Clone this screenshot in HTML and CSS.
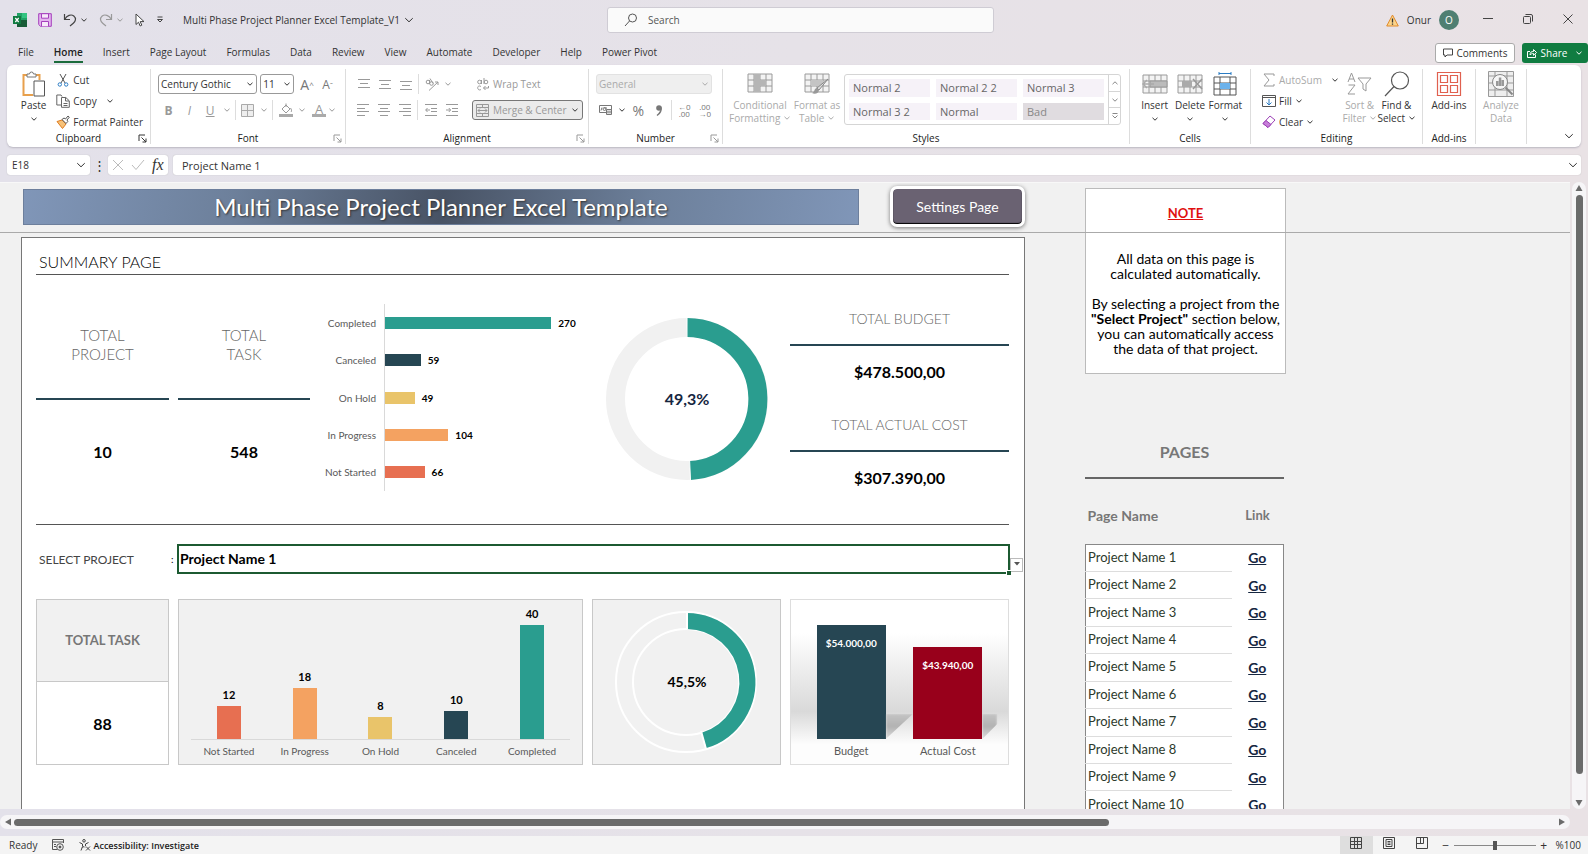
FILE: index.html
```html
<!DOCTYPE html>
<html lang="en">
<head>
    <meta charset="UTF-8">
    <meta name="viewport" content="width=device-width, initial-scale=1.0">
    <title>Multi Phase Project Planner Excel Template_V1</title>
    <link rel="stylesheet" href="styles.css">
</head>
<body>
    <!-- shared icons -->
    <svg class="defs" width="0" height="0" aria-hidden="true">
        <symbol id="chev" viewBox="0 0 8 8"><path d="M1.5 2.8 4 5.2 6.5 2.8" fill="none" stroke="currentColor" vector-effect="non-scaling-stroke"/></symbol>
        <symbol id="launch" viewBox="0 0 9 9"><path d="M1 7V1h6M3.5 3.5 8 8M8 4.5V8H4.500" fill="none" stroke="currentColor"/></symbol>
        <symbol id="table" viewBox="0 0 26 20"><path d="M1 1h24v18H1zM1 7h24M1 13h24M7 1v18M13 1v18M19 1v18" fill="#f3f3f3" stroke="#9a9a9a"/></symbol>
    </svg>

    <div class="app">
        <header class="titlebar">
            <div class="quick">
                <svg width="14" height="14" viewBox="0 0 14 14"><path d="M4 0h10v14H4z" fill="#21a366"/><path d="M9 0h5v5H9z" fill="#33c481"/><path d="M4 7h10v7H4z" fill="#185c37"/><path d="M0 3h8v8H0z" fill="#107c41"/><path d="m2.300 5 3.400 4M5.700 5 2.300 9" stroke="#fff" stroke-width="1.200"/></svg>
                <button class="tool" aria-label="Save"><svg width="14" height="14" viewBox="0 0 14 14" fill="#e3b4ee" stroke="#a53fbd"><path d="M.7.7h12.600v12.600H2.500L.7 11.500z"/><path d="M3.500.7h7v4.500h-7zM3.500 13.300V8.500h7v4.800" fill="#f6e9f9"/></svg></button>
                <button class="tool" aria-label="Undo"><svg width="14" height="14" viewBox="0 0 14 14" fill="none" stroke="#444" stroke-width="1.200"><path d="M1.500 1v5.500H7M1.800 6.200C4 2.500 8 .8 10.800 3c3 2.600 1.500 5.500-.5 7.200L7 13"/></svg><svg class="c" width="8" height="8"><use href="#chev"/></svg></button>
                <button class="tool faded" aria-label="Redo"><svg width="14" height="14" viewBox="0 0 14 14" fill="none" stroke="currentColor" stroke-width="1.200"><path d="M12.500 1v5.500H7M12.200 6.200C10 2.500 6 .8 3.200 3c-3 2.600-1.500 5.500.5 7.200L7 13"/></svg><svg class="c" width="8" height="8"><use href="#chev"/></svg></button>
                <button class="tool" aria-label="Select objects"><svg width="10" height="14" viewBox="0 0 10 14" fill="#fff" stroke="#444"><path d="M1 1v10.500l2.500-2.300 1.700 3.800 1.600-.8-1.600-3.600H9z"/></svg></button>
                <button class="tool" aria-label="Customize toolbar"><svg width="8" height="8" viewBox="0 0 8 8" fill="none" stroke="#444"><path d="M1.500 1h5M1.500 3.500 4 6l2.500-2.500z"/></svg></button>
            </div>
            <button class="doc-name">Multi Phase Project Planner Excel Template_V1 <svg width="12" height="12"><use href="#chev"/></svg></button>
            <label class="search">
                <svg width="14" height="14" viewBox="0 0 14 14" fill="none" stroke="#555"><circle cx="8.500" cy="5" r="4"/><path d="M5.500 8 1 13"/></svg>
                <input type="text" placeholder="Search" aria-label="Search">
            </label>
            <div class="account">
                <svg width="13" height="13" viewBox="0 0 13 13"><path d="M6.500 1 12.300 12H.7z" fill="#fbd48a" stroke="#e08a2c"/><path d="M6.500 4.500v4M6.500 9.500v1.300" stroke="#333" stroke-width="1.300"/></svg>
                <span>Onur</span>
                <span class="avatar">O</span>
            </div>
            <div class="window-buttons">
                <button aria-label="Minimize"><svg width="10" height="10" viewBox="0 0 10 10" stroke="#444"><path d="M0 4.500h10"/></svg></button>
                <button aria-label="Restore"><svg width="10" height="10" viewBox="0 0 10 10" fill="none" stroke="#444"><rect x=".5" y="2.500" width="7" height="7" rx="1"/><path d="M2.500.5h5.500a1.500 1.500 0 0 1 1.500 1.500v5.500"/></svg></button>
                <button aria-label="Close"><svg width="10" height="10" viewBox="0 0 10 10" stroke="#444"><path d="m.5.5 9 9M9.500.5l-9 9"/></svg></button>
            </div>
        </header>

        <nav class="tabs">
            <a href="#">File</a>
            <a href="#" class="active">Home</a>
            <a href="#">Insert</a>
            <a href="#">Page Layout</a>
            <a href="#">Formulas</a>
            <a href="#">Data</a>
            <a href="#">Review</a>
            <a href="#">View</a>
            <a href="#">Automate</a>
            <a href="#">Developer</a>
            <a href="#">Help</a>
            <a href="#">Power Pivot</a>
            <button class="comments"><svg width="10" height="10" viewBox="0 0 10 10" fill="none" stroke="#444"><path d="M.5 1h9v6H4L2 9V7H.5z"/></svg>Comments</button>
            <button class="share"><svg width="10" height="10" viewBox="0 0 10 10" fill="none" stroke="#fff"><path d="M3 3.500H.5v6h8V6.500M3 7c0-3 1.500-3.500 3.500-3.500V1.500l3 3-3 2.800V5.500C5 5.500 4 5.800 3 7z"/></svg>Share<svg class="c" width="8" height="8"><use href="#chev"/></svg></button>
        </nav>

        <div class="ribbon">
            <section class="group g-clip">
                <div class="body">
                    <button class="big"><svg width="24" height="26" viewBox="0 0 24 26" fill="none"><path d="M11 24H1.500V4H6M13 4h4.500v5" stroke="#e8a04c" stroke-width="2"/><path d="M5 6V3h2.500a2 2 0 0 1 4 0H14v3z" fill="#fff" stroke="#777"/><path d="M12 10h10.500v15H12z" fill="#fff" stroke="#555"/></svg>Paste<svg class="c" width="8" height="8"><use href="#chev"/></svg></button>
                    <div class="list">
                        <button><svg width="14" height="14" viewBox="0 0 14 14" fill="none"><path d="m4 1 5 9M10 1 5 10" stroke="#555"/><circle cx="3.800" cy="11.500" r="1.700" stroke="#2b7cc4"/><circle cx="10.200" cy="11.500" r="1.700" stroke="#2b7cc4"/></svg>Cut</button>
                        <button><svg width="14" height="14" viewBox="0 0 14 14" fill="#fff" stroke="#666"><path d="M5 11H.8V1H5l1 1.500"/><path d="M5.500 3.500h4.300l3.500 3.300v6.500H5.500z"/><path d="M9.500 3.500V7h3.500M7.500 9.500h4M7.500 11.500h4" fill="none"/></svg>Copy<svg class="c far" width="8" height="8"><use href="#chev"/></svg></button>
                        <button><svg width="14" height="14" viewBox="0 0 14 14"><path d="M1 6.500 6 5l4 4-3.500 4.500z" fill="#f6c27a" stroke="#e07c1e"/><path d="M6 4.500 8 3l1.500 1L12 1l1.300 1.200L11 5l.8 1.500-1.800 2z" fill="#fff" stroke="#555"/></svg>Format Painter</button>
                    </div>
                </div>
                <h2>Clipboard</h2>
                <svg class="launcher" width="9" height="9"><use href="#launch"/></svg>
            </section>

            <section class="group g-font">
                <div class="rows">
                    <div class="row">
                        <span class="drop w-font"><select aria-label="Font"><option>Century Gothic</option></select><svg width="8" height="8"><use href="#chev"/></svg></span>
                        <span class="drop w-size"><select aria-label="Font size"><option>11</option></select><svg width="8" height="8"><use href="#chev"/></svg></span>
                        <button class="ib letter" aria-label="Increase font size">A<sup>^</sup></button>
                        <button class="ib letter small" aria-label="Decrease font size">A<sup>ˇ</sup></button>
                    </div>
                    <div class="row faded">
                        <button class="ib"><b>B</b></button>
                        <button class="ib"><i>I</i></button>
                        <button class="ib"><u>U</u></button>
                        <button class="cb" aria-label="Underline options"><svg width="8" height="8"><use href="#chev"/></svg></button>
                        <span class="sep"></span>
                        <button class="ib" aria-label="Borders"><svg width="13" height="13" viewBox="0 0 13 13" fill="#eee" stroke="#aaa"><path d="M.5.5h12v12H.5zM6.500.5v12M.5 6.500h12"/></svg></button>
                        <button class="cb" aria-label="Border options"><svg width="8" height="8"><use href="#chev"/></svg></button>
                        <span class="sep"></span>
                        <button class="ib" aria-label="Fill color"><svg width="14" height="14" viewBox="0 0 14 14" fill="none" stroke="#999"><path d="m3 6 4-4 4 4-4 4zM7 4V.5M11.500 5c1 1.500 1.500 3 .5 4"/><path d="M0 12.500h14" stroke="#aaa" stroke-width="3"/></svg></button>
                        <button class="cb" aria-label="Fill options"><svg width="8" height="8"><use href="#chev"/></svg></button>
                        <button class="ib font-color" aria-label="Font color">A</button>
                        <button class="cb" aria-label="Font color options"><svg width="8" height="8"><use href="#chev"/></svg></button>
                    </div>
                </div>
                <h2>Font</h2>
                <svg class="launcher faded" width="9" height="9"><use href="#launch"/></svg>
            </section>

            <section class="group g-align">
                <div class="body faded">
                    <div class="rows">
                        <div class="row">
                            <button class="ib" aria-label="Top align"><svg width="12" height="12" viewBox="0 0 12 12" stroke="currentColor"><path d="M0 1.500h12M2 5.500h8M0 9.500h12"/></svg></button>
                            <button class="ib" aria-label="Middle align"><svg width="12" height="12" viewBox="0 0 12 12" stroke="currentColor"><path d="M0 2.500h12M2 6.500h8M0 10.500h12"/></svg></button>
                            <button class="ib" aria-label="Bottom align"><svg width="12" height="12" viewBox="0 0 12 12" stroke="currentColor"><path d="M0 3.500h12M2 7.500h8M0 11.500h12"/></svg></button>
                            <span class="sep"></span>
                            <button class="ib" aria-label="Orientation"><svg width="14" height="13" viewBox="0 0 14 13" fill="none" stroke="currentColor"><path d="M4 12.500 13 4M10 4h3v3"/><circle cx="3" cy="4" r="1.800"/><circle cx="6.500" cy="5.500" r="1.800"/><path d="M4.500 2v4M5 .5l3 5"/></svg></button>
                            <button class="cb" aria-label="Orientation options"><svg width="8" height="8"><use href="#chev"/></svg></button>
                        </div>
                        <div class="row">
                            <button class="ib" aria-label="Align left"><svg width="12" height="12" viewBox="0 0 12 12" stroke="currentColor"><path d="M0 .5h12M0 4.500h8M0 7.500h12M0 11.500h8"/></svg></button>
                            <button class="ib" aria-label="Center"><svg width="12" height="12" viewBox="0 0 12 12" stroke="currentColor"><path d="M0 .5h12M2 4.500h8M0 7.500h12M2 11.500h8"/></svg></button>
                            <button class="ib" aria-label="Align right"><svg width="12" height="12" viewBox="0 0 12 12" stroke="currentColor"><path d="M0 .5h12M4 4.500h8M0 7.500h12M4 11.500h8"/></svg></button>
                            <span class="sep"></span>
                            <button class="ib" aria-label="Decrease indent"><svg width="12" height="12" viewBox="0 0 12 12" fill="none" stroke="currentColor"><path d="M0 .5h12M6 4.500h6M6 7.500h6M0 11.500h12M5 6H.8M2.500 4 .7 6l1.800 2"/></svg></button>
                            <button class="ib" aria-label="Increase indent"><svg width="12" height="12" viewBox="0 0 12 12" fill="none" stroke="currentColor"><path d="M0 .5h12M6 4.500h6M6 7.500h6M0 11.500h12M0 6h4.500M2.800 4l1.800 2-1.800 2"/></svg></button>
                        </div>
                    </div>
                    <span class="sep tall"></span>
                    <div class="rows">
                        <div class="row"><button class="wrap"><svg width="12" height="13" viewBox="0 0 12 13" fill="none" stroke="currentColor"><circle cx="2.500" cy="4" r="1.800"/><path d="M4.500 2v4M7 0v6M4 8.500C1.500 7 0 9 1 11c.8 1.300 2 1 3 .5M6.500 10h5V8M8.500 8l-2 2 2 2"/><circle cx="9" cy="4" r="1.800"/></svg>Wrap Text</button></div>
                        <div class="row"><button class="merge"><svg width="13" height="13" viewBox="0 0 13 13" fill="none" stroke="currentColor"><path d="M.5.5h12v12H.5zM.5 3.500h12M.5 9.500h12M6.500.5v3M6.500 9.500v3M2 6.500h9M4 4.500l-2 2 2 2M9 4.500l2 2-2 2"/></svg>Merge &amp; Center<svg class="c" width="8" height="8"><use href="#chev"/></svg></button></div>
                    </div>
                </div>
                <h2>Alignment</h2>
                <svg class="launcher faded" width="9" height="9"><use href="#launch"/></svg>
            </section>

            <section class="group g-number">
                <div class="rows">
                    <div class="row"><span class="drop off"><select aria-label="Number format"><option>General</option></select><svg width="8" height="8"><use href="#chev"/></svg></span></div>
                    <div class="row mid">
                        <button class="ib" aria-label="Accounting format"><svg width="14" height="12" viewBox="0 0 14 12" fill="none" stroke="currentColor"><path d="M.5 1.500h12v7H.5zM3 3.500l-1 3M5 4h3"/><circle cx="5.500" cy="5" r="1.500"/><path d="M7.500 5.500h5v5h-5zM7.500 8h5" fill="#ddd"/></svg></button>
                        <button class="cb dark" aria-label="Accounting options"><svg width="8" height="8"><use href="#chev"/></svg></button>
                        <button class="ib pct">%</button>
                        <button class="ib" aria-label="Comma style"><svg width="8" height="13" viewBox="0 0 8 13"><circle cx="4" cy="4" r="2.800" fill="currentColor"/><path d="M6 3.500C6.500 7 5 9.500 2 11.500" fill="none" stroke="currentColor" stroke-width="1.500"/></svg></button>
                        <span class="sep"></span>
                        <button class="ib dec">←0<br>.00</button>
                        <button class="ib dec">.00<br>→0</button>
                    </div>
                </div>
                <h2>Number</h2>
                <svg class="launcher faded" width="9" height="9"><use href="#launch"/></svg>
            </section>

            <section class="group g-styles">
                <div class="body">
                    <button class="big off"><svg width="26" height="22" viewBox="0 0 26 22"><use href="#table" width="26" height="20"/><path d="M7 1h6v6h6v6h-6v6H7z" fill="#b5b5b5"/></svg>Conditional<span>Formatting <svg width="8" height="8"><use href="#chev"/></svg></span></button>
                    <button class="big off"><svg width="26" height="22" viewBox="0 0 26 22"><use href="#table" width="26" height="20"/><path d="M7 7h12v6H7z" fill="#c4c4c4"/><path d="M24 6 15 17l-2-2z" fill="#ddd" stroke="#888"/><path d="M13 15c-3 0-2 4-5 5 3 2 7 0 7-3z" fill="#999"/></svg>Format as<span>Table <svg width="8" height="8"><use href="#chev"/></svg></span></button>
                    <div class="gallery">
                        <div class="swatches">
                            <button>Normal 2</button>
                            <button>Normal 2 2</button>
                            <button>Normal 3</button>
                            <button>Normal 3 2</button>
                            <button>Normal</button>
                            <button class="bad">Bad</button>
                        </div>
                        <div class="spin">
                            <button aria-label="Previous styles"><svg class="up" width="8" height="8"><use href="#chev"/></svg></button>
                            <button aria-label="Next styles"><svg width="8" height="8"><use href="#chev"/></svg></button>
                            <button aria-label="More styles"><svg width="8" height="8" viewBox="0 0 8 8" fill="none" stroke="currentColor"><path d="M1.500 1.500h5M1.500 3.500 4 6l2.500-2.500"/></svg></button>
                        </div>
                    </div>
                </div>
                <h2>Styles</h2>
            </section>

            <section class="group g-cells">
                <div class="body">
                    <button class="big"><svg width="26" height="26" viewBox="0 0 26 26"><use href="#table" y="3" width="26" height="20"/><path d="M8 10h17v6H8z" fill="#bbb" stroke="#999"/><path d="M12 13H1M5 9l-4 4 4 4" fill="none" stroke="#aaa" stroke-width="1.500"/></svg>Insert<svg class="c" width="8" height="8"><use href="#chev"/></svg></button>
                    <button class="big"><svg width="26" height="26" viewBox="0 0 26 26"><use href="#table" y="3" width="26" height="20"/><path d="M5 10h10v6H5z" fill="#aaa"/><path d="m16 8 9 10M25 8l-9 10" stroke="#999" stroke-width="1.500"/></svg>Delete<svg class="c" width="8" height="8"><use href="#chev"/></svg></button>
                    <button class="big"><svg width="26" height="26" viewBox="0 0 26 26"><path d="M2 6h22v18H2zM2 12h22M2 18h22M8 6v18M18 6v18" fill="#fff" stroke="#555"/><path d="M8 12h10v6H8z" fill="#6cb2eb"/><path d="M7 2.500h12M7 1v3M19 1v3" stroke="#2b7cc4"/></svg>Format<svg class="c" width="8" height="8"><use href="#chev"/></svg></button>
                </div>
                <h2>Cells</h2>
            </section>

            <section class="group g-edit">
                <div class="body">
                    <div class="list">
                        <button class="off"><svg width="14" height="14" viewBox="0 0 14 14" fill="none" stroke="#999"><path d="M12 3V1H2l5 6-5 6h10v-2"/></svg>AutoSum<svg class="c far dark" width="8" height="8"><use href="#chev"/></svg></button>
                        <button><svg width="14" height="14" viewBox="0 0 14 14" fill="#fff" stroke="#555"><path d="M.5 1.500h13v11H.5zM.5 3.500h13"/><path d="M7 5v6M4.500 8.500 7 11l2.500-2.500" stroke="#2b7cc4"/></svg>Fill<svg class="c" width="8" height="8"><use href="#chev"/></svg></button>
                        <button><svg width="14" height="14" viewBox="0 0 14 14"><path d="M8 1 13 5 6 12.500 1 8.500z" fill="#fff" stroke="#9b3fb5"/><path d="M4 5.500 9 9.500 6 12.500 1 8.500z" fill="#c77fd9" stroke="#9b3fb5"/></svg>Clear<svg class="c" width="8" height="8"><use href="#chev"/></svg></button>
                    </div>
                    <button class="big off"><svg width="26" height="26" viewBox="0 0 26 26" fill="none" stroke="#999"><path d="M1 11 4.500 2 8 11M2 8h5M1.500 14H8l-7 9h7M11 7h13l-5 6v7l-3-2v-5z"/></svg>Sort &amp;<span>Filter <svg width="8" height="8"><use href="#chev"/></svg></span></button>
                    <button class="big"><svg width="26" height="26" viewBox="0 0 26 26" fill="none" stroke="#555" stroke-width="1.200"><circle cx="16" cy="9.500" r="8.500"/><path d="M10 15.500 1 25"/></svg>Find &amp;<span>Select <svg width="8" height="8"><use href="#chev"/></svg></span></button>
                </div>
                <h2>Editing</h2>
            </section>

            <section class="group g-add">
                <div class="body">
                    <button class="big"><svg width="26" height="26" viewBox="0 0 26 26" fill="none" stroke="#e0604f" stroke-width="1.200"><path d="M1.500 1.500h23v23h-23zM4.500 4.500h7v7h-7zM14.500 4.500h7v7h-7zM4.500 14.500h7v7h-7zM14.500 14.500h7v7h-7z"/></svg>Add-ins</button>
                </div>
                <h2>Add-ins</h2>
            </section>

            <section class="group g-analyze">
                <div class="body">
                    <button class="big off"><svg width="26" height="26" viewBox="0 0 26 26"><path d="M.5.5h25v25H.5zM.5 5h25M.5 19h25M.5 12h25M7 .5v25M19 .5v25" fill="#eee" stroke="#999"/><circle cx="12" cy="11" r="7.500" fill="#f6f6f6" stroke="#888"/><path d="m17.500 16.500 7 7" stroke="#888" stroke-width="2"/><path d="M8 10h2.500v5H8zM10.800 6.500h2.500V15h-2.500zM13.600 9H16v6h-2.400z" fill="#999"/></svg>Analyze<span>Data</span></button>
                </div>
            </section>
            <button class="collapse" aria-label="Collapse ribbon"><svg width="12" height="12"><use href="#chev"/></svg></button>
        </div>

        <div class="formula-bar">
            <div class="name-box"><input type="text" value="E18" aria-label="Name box"><svg width="12" height="12"><use href="#chev"/></svg></div>
            <span class="dots">⋮</span>
            <div class="fx">
                <svg width="12" height="12" viewBox="0 0 12 12" stroke="#bbb"><path d="m1 1 10 10M11 1 1 11"/></svg>
                <svg width="14" height="12" viewBox="0 0 14 12" fill="none" stroke="#bbb"><path d="m1 6 4 4.500L13 1"/></svg>
                <i>fx</i>
            </div>
            <div class="formula"><input type="text" value="Project Name 1" aria-label="Formula"><svg width="12" height="12"><use href="#chev"/></svg></div>
        </div>

        <div class="workspace">
            <main class="sheet">
                <div class="dashboard">
                    <div class="top">
                        <h1>Multi Phase Project Planner Excel Template</h1>
                        <button class="settings">Settings Page</button>
                    </div>
                    <div class="panel">
                        <h2 class="panel-title">SUMMARY PAGE</h2>
                        <div class="grid summary">
                            <div class="stat"><h3>TOTAL<br>PROJECT</h3><p>10</p></div>
                            <div class="split">
                                <div class="stat"><h3>TOTAL<br>TASK</h3><p>548</p></div>
                                <div class="hbars">
                                    <div class="hbar"><span class="name">Completed</span><div class="track"><div class="bar completed" style="width: 84%"></div><b>270</b></div></div>
                                    <div class="hbar"><span class="name">Canceled</span><div class="track"><div class="bar canceled" style="width: 18%"></div><b>59</b></div></div>
                                    <div class="hbar"><span class="name">On Hold</span><div class="track"><div class="bar hold" style="width: 15%"></div><b>49</b></div></div>
                                    <div class="hbar"><span class="name">In Progress</span><div class="track"><div class="bar progress" style="width: 32%"></div><b>104</b></div></div>
                                    <div class="hbar"><span class="name">Not Started</span><div class="track"><div class="bar waiting" style="width: 20%"></div><b>66</b></div></div>
                                </div>
                            </div>
                            <div class="donut">
                                <svg width="164" height="164" viewBox="0 0 164 164">
                                    <circle cx="82" cy="82" r="71.500" fill="none" stroke="#f1f1f1" stroke-width="19"/>
                                    <path d="M82 10.500A71.500 71.500 0 0 1 85.100 153.400" fill="none" stroke="#2a9d8f" stroke-width="19"/>
                                    <path d="M82 0v21M84.600 143l.9 21" stroke="#fff"/>
                                    <text x="82" y="88">49,3%</text>
                                </svg>
                            </div>
                            <div class="money">
                                <div><h3>TOTAL BUDGET</h3><p>$478.500,00</p></div>
                                <div><h3>TOTAL ACTUAL COST</h3><p>$307.390,00</p></div>
                            </div>
                        </div>

                        <div class="picker">
                            <label for="project">SELECT PROJECT</label>
                            <span class="colon">:</span>
                            <div class="cell">
                                <select id="project"><option>Project Name 1</option></select>
                                <span class="arrow"><svg width="8" height="6" viewBox="0 0 8 6"><path d="M1 1h6L4 4.500z" fill="#555"/></svg></span>
                                <span class="handle"></span>
                            </div>
                        </div>

                        <div class="grid cards">
                            <div class="card total"><h3>TOTAL TASK</h3><p>88</p></div>
                            <div class="card gray chart">
                                <div class="plot">
                                    <div class="col"><b>12</b><div class="bar waiting" style="height: 24%"></div></div>
                                    <div class="col"><b>18</b><div class="bar progress" style="height: 37%"></div></div>
                                    <div class="col"><b>8</b><div class="bar hold" style="height: 16%"></div></div>
                                    <div class="col"><b>10</b><div class="bar canceled" style="height: 20%"></div></div>
                                    <div class="col"><b>40</b><div class="bar completed" style="height: 82%"></div></div>
                                </div>
                                <div class="names"><span>Not Started</span><span>In Progress</span><span>On Hold</span><span>Canceled</span><span>Completed</span></div>
                            </div>
                            <div class="card gray donut small">
                                <svg width="144" height="144" viewBox="0 0 144 144">
                                    <g fill="none" stroke="#fff" stroke-width="2"><circle cx="71" cy="72" r="70"/><circle cx="71" cy="72" r="53"/></g>
                                    <path d="M72 11A61 61 0 0 1 89 130.400" fill="none" stroke="#2a9d8f" stroke-width="16"/>
                                    <path d="M72 2v17M86 121l5 18" stroke="#fff" stroke-width="2"/>
                                    <text x="72" y="77">45,5%</text>
                                </svg>
                            </div>
                            <div class="card chart cost">
                                <div class="plot">
                                    <div class="col"><div class="bar canceled" style="height: 82%"><b>$54.000,00</b></div></div>
                                    <div class="col"><div class="bar actual" style="height: 66%"><b>$43.940,00</b></div></div>
                                </div>
                                <div class="names"><span>Budget</span><span>Actual Cost</span></div>
                            </div>
                        </div>
                    </div>
                </div>

                <aside class="side">
                    <div class="note">
                        <h2>NOTE</h2>
                        <p>All data on this page is<br>calculated automatically.</p>
                        <p>By selecting a project from the<br><b>"Select Project"</b> section below,<br>you can automatically access<br>the data of that project.</p>
                    </div>
                    <h2 class="pages-title">PAGES</h2>
                    <table class="pages">
                        <thead><tr><th>Page Name</th><th>Link</th></tr></thead>
                        <tbody>
                            <tr><td>Project Name 1</td><td><a href="#">Go</a></td></tr>
                            <tr><td>Project Name 2</td><td><a href="#">Go</a></td></tr>
                            <tr><td>Project Name 3</td><td><a href="#">Go</a></td></tr>
                            <tr><td>Project Name 4</td><td><a href="#">Go</a></td></tr>
                            <tr><td>Project Name 5</td><td><a href="#">Go</a></td></tr>
                            <tr><td>Project Name 6</td><td><a href="#">Go</a></td></tr>
                            <tr><td>Project Name 7</td><td><a href="#">Go</a></td></tr>
                            <tr><td>Project Name 8</td><td><a href="#">Go</a></td></tr>
                            <tr><td>Project Name 9</td><td><a href="#">Go</a></td></tr>
                            <tr><td>Project Name 10</td><td><a href="#">Go</a></td></tr>
                        </tbody>
                    </table>
                </aside>
                <div class="freeze"></div>
            </main>
            <div class="vscroll">
                <svg width="8" height="8" viewBox="0 0 8 8"><path d="M4 1 7.500 7h-7z" fill="#6b6b6b"/></svg>
                <div class="thumb"></div>
                <svg width="8" height="8" viewBox="0 0 8 8"><path d="M4 7 .5 1h7z" fill="#6b6b6b"/></svg>
            </div>
        </div>

        <div class="hscroll">
            <svg width="8" height="8" viewBox="0 0 8 8"><path d="M1 4 7 .5v7z" fill="#6b6b6b"/></svg>
            <div class="rail"><div class="thumb"></div></div>
            <svg width="8" height="8" viewBox="0 0 8 8"><path d="M7 4 1 .5v7z" fill="#6b6b6b"/></svg>
        </div>

        <footer class="status">
            <span>Ready</span>
            <svg width="12" height="12" viewBox="0 0 12 12" fill="none" stroke="#555"><path d="M11.500 4V.5H.5v10H5M.5 3h11M2 5.500h2M2 7.500h2"/><circle cx="8" cy="8" r="3.300"/><circle cx="8" cy="8" r="1" fill="#333"/></svg>
            <span class="access"><svg width="12" height="12" viewBox="0 0 12 12" fill="none" stroke="#444"><circle cx="5" cy="1.800" r="1.300"/><path d="M.5 3.500 3.500 5v2.500L2 11.500M9.500 3.500 6.500 5v2M3.500 8.500l1.500-1 1 1M7 7.500l4 4M11 7.500l-4 4"/></svg>Accessibility: Investigate</span>
            <div class="views">
                <button class="on" aria-label="Normal view"><svg width="12" height="12" viewBox="0 0 12 12" fill="none" stroke="#444"><path d="M.5.5h11v11H.5zM.5 4.500h11M.5 7.500h11M4.500.5v11M7.500.5v11"/></svg></button>
                <button aria-label="Page layout view"><svg width="12" height="12" viewBox="0 0 12 12" fill="none" stroke="#444"><path d="M.5.5h11v11H.5zM3 2.500h6v7H3zM4.500 4.500h3M4.500 6h3M4.500 7.500h3"/></svg></button>
                <button aria-label="Page break view"><svg width="12" height="12" viewBox="0 0 12 12" fill="none" stroke="#444"><path d="M.5.5h11v11H.5zM4.500.5v6M7.500.5v6M.5 6.500h7"/></svg></button>
            </div>
            <div class="zoom">
                <button aria-label="Zoom out">−</button>
                <input type="range" min="0" max="200" value="100" aria-label="Zoom">
                <button aria-label="Zoom in">+</button>
                <span>%100</span>
            </div>
        </footer>
    </div>
</body>
</html>
```
FILE: styles.css
```css
* {
    box-sizing: border-box;
}

body {
    margin: 0;
    font-family: "Open Sans", "Noto Sans", sans-serif;
    font-size: 10px;
    color: #333;
}

h1, h2, h3, p {
    margin: 0;
    font-weight: normal;
}

button, input, select {
    font: inherit;
    color: inherit;
    background: none;
    border: none;
    padding: 0;
    margin: 0;
}

select {
    appearance: none;
}

svg {
    flex: none;
}

.defs {
    position: absolute;
}

.app {
    display: flex;
    flex-direction: column;
    height: 100vh;
    overflow: hidden;
    background: linear-gradient(90deg, #e3e1ea, #e6e2e8 50%, #e9e2e5);
}

.faded {
    color: #999;
}

.off {
    color: #aaa;
}

/* title bar */
.titlebar {
    display: grid;
    grid-template-columns: 183px 424fr 387px 474fr 120px;
    align-items: center;
    height: 40px;
    flex: none;
}

.quick {
    display: flex;
    align-items: center;
    gap: 11px;
    padding-left: 13px;
}

.tool {
    display: flex;
    align-items: center;
    gap: 3px;
}

.doc-name {
    display: flex;
    align-items: center;
    gap: 3px;
    white-space: nowrap;
}

.search {
    display: flex;
    align-items: center;
    gap: 10px;
    height: 26px;
    padding: 0 16px;
    background: #fafafa;
    border: 1px solid #cfccd4;
    border-radius: 3px;
}

.search input {
    flex: 1;
}

.search input::placeholder {
    color: #555;
}

.account {
    display: flex;
    align-items: center;
    justify-content: flex-end;
    gap: 8px;
    padding-right: 9px;
}

.avatar {
    width: 20px;
    height: 20px;
    line-height: 20px;
    border-radius: 50%;
    background: #4f7f72;
    color: #fff;
    text-align: center;
}

.window-buttons {
    display: flex;
}

.window-buttons button {
    width: 40px;
}

/* tabs */
.tabs {
    display: flex;
    align-items: center;
    gap: 20px;
    height: 25px;
    flex: none;
    padding-left: 18px;
}

.tabs a {
    color: #333;
    text-decoration: none;
    line-height: 18px;
    border-bottom: 2px solid transparent;
}

.tabs .active {
    font-weight: 600;
    color: #222;
    border-color: #1b6b3c;
}

.comments, .share {
    display: flex;
    align-items: center;
    justify-content: center;
    gap: 4px;
    height: 20px;
    border-radius: 3px;
}

.comments {
    margin-left: auto;
    width: 80px;
    background: #fff;
    border: 1px solid #aaa;
}

.share {
    margin-left: -13px;
    width: 66px;
    background: #107c41;
    color: #fff;
}

.share .c {
    margin-left: 4px;
}

/* ribbon */
.ribbon {
    display: flex;
    flex: none;
    height: 82px;
    margin: 0 7px;
    padding: 4px 0 3px;
    background: #fff;
    border-radius: 6px;
    box-shadow: 0 1px 2px #b9b6c0;
}

.group {
    position: relative;
    display: flex;
    flex-direction: column;
    padding: 0 7px;
    border-right: 1px solid #ddd;
}

.group h2 {
    margin-top: auto;
    font-size: 10px;
    line-height: 12px;
    text-align: center;
    color: #222;
}

.launcher {
    position: absolute;
    right: 3px;
    bottom: 1px;
}

.g-clip { width: 144px; }
.g-font { width: 195px; }
.g-align { width: 243px; }
.g-number { width: 134px; }
.g-styles { width: 407px; }
.g-cells { width: 121px; }
.g-edit { width: 172px; }
.g-add { width: 53px; }
.g-analyze { width: 51px; }

.body {
    display: flex;
}

.big {
    display: flex;
    flex-direction: column;
    align-items: center;
    width: 38px;
    padding-top: 2px;
    line-height: 13px;
    white-space: nowrap;
}

.big > svg:first-child {
    height: 26px;
    margin-bottom: 2px;
}

.big .c {
    margin-top: 3px;
}

.g-clip .body {
    padding-left: 1px;
    gap: 4px;
}

.list button {
    display: flex;
    align-items: center;
    gap: 3px;
    height: 21px;
    white-space: nowrap;
}

.list .far {
    margin-left: 6px;
}

.dark {
    color: #333;
}

.rows {
    display: flex;
    flex-direction: column;
    gap: 6px;
    padding-top: 5px;
}

.row {
    display: flex;
    align-items: center;
    height: 20px;
}

.drop {
    display: flex;
    align-items: center;
    height: 20px;
    padding: 0 2px;
    border: 1px solid #999;
    border-radius: 3px;
    margin-right: 3px;
}

.drop select {
    flex: 1;
    min-width: 0;
}

.w-font { width: 101px; }
.w-size { width: 34px; }

.drop.off {
    width: 121px;
    background: #efefef;
    border-color: #e2e2e2;
}

.ib {
    display: flex;
    align-items: center;
    justify-content: center;
    width: 21px;
    height: 20px;
    font-size: 12px;
}

.cb {
    width: 12px;
    display: flex;
    justify-content: center;
}

.letter {
    font-size: 14px;
    color: #777;
}

.letter.small {
    font-size: 12px;
}

.letter sup {
    font-size: 8px;
}

.font-color {
    font-size: 13px;
    height: 14px;
    border-bottom: 3px solid #aaa;
    width: 14px;
    margin-left: 4px;
}

.sep {
    width: 1px;
    height: 20px;
    margin: 0 2px;
    background: #ddd;
}

.sep.tall {
    height: 50px;
    margin: 5px 5px 0 5px;
}

.g-align .rows:first-child {
    width: 109px;
}

.wrap, .merge {
    display: flex;
    align-items: center;
    gap: 4px;
    height: 20px;
    padding-left: 5px;
    white-space: nowrap;
}

.merge {
    width: 111px;
    padding-left: 3px;
    background: #ebebeb;
    border: 1px solid #777;
    border-radius: 3px;
}

.merge .c {
    margin-left: auto;
    margin-right: 3px;
    color: #333;
}

.mid {
    color: #777;
}

.pct {
    font-size: 14px;
}

.dec {
    font-size: 8px;
    line-height: 7px;
}

.g-styles .big {
    width: 56px;
    padding-left: 4px;
    color: #aaa;
}

.g-styles .big + .big {
    padding-left: 6px;
}

.gallery {
    display: flex;
    flex: 1;
    height: 51px;
    margin: 5px 1px 0 2px;
    border: 1px solid #d5d5d5;
    border-radius: 3px;
}

.swatches {
    flex: 1;
    display: grid;
    grid-template-columns: repeat(3, 1fr);
    gap: 6px;
    padding: 4px;
}

.swatches button {
    background: #f6f2f8;
    color: #666;
    font-size: 11px;
    text-align: left;
    padding-left: 4px;
}

.swatches .bad {
    background: #e0dce0;
    color: #888;
}

.spin {
    display: flex;
    flex-direction: column;
    width: 12px;
    border-left: 1px solid #d5d5d5;
    color: #888;
}

.spin button {
    flex: 1;
    line-height: 8px;
}

.spin button + button {
    border-top: 1px solid #d5d5d5;
}

.up {
    transform: rotate(180deg);
}

.g-cells .big {
    width: 36px;
}

.g-edit .list {
    width: 84px;
    padding-left: 4px;
}

.g-edit .big {
    width: 37px;
}

.collapse {
    margin: auto 6px 2px auto;
    height: 12px;
    line-height: 12px;
}

/* formula bar */
.formula-bar {
    display: flex;
    align-items: center;
    flex: none;
    margin: 8px 7px 7px;
    height: 20px;
    font-size: 11px;
}

.name-box, .fx, .formula {
    display: flex;
    align-items: center;
    height: 20px;
    background: #fff;
    border-radius: 3px;
    box-shadow: 0 0 1px #aaa;
}

.name-box {
    width: 83px;
    padding: 0 3px 0 5px;
}

.name-box input {
    width: 63px;
    font-size: 10px;
}

.dots {
    width: 18px;
    text-align: center;
    font-size: 13px;
}

.fx {
    width: 60px;
    gap: 7px;
    padding-left: 4px;
    margin-right: 5px;
}

.fx i {
    font: italic 16px "Liberation Serif", serif;
}

.formula {
    flex: 1;
    padding: 0 2px 0 9px;
}

.formula input {
    flex: 1;
}

/* sheet */
.workspace {
    display: flex;
    flex: 1;
    min-height: 0;
}

.sheet {
    position: relative;
    flex: 1;
    display: flex;
    overflow: hidden;
    background: #f1f1f1;
    border-top: 1px solid #f8f8f8;
    padding: 3px 284px 0 21px;
    gap: 60px;
    font-family: Lato, sans-serif;
    color: #000;
}

.freeze {
    position: absolute;
    left: 0;
    right: 0;
    top: 49px;
    height: 1px;
    background: #aaa;
}

.dashboard {
    flex: 1;
    display: flex;
    flex-direction: column;
}

.top {
    display: flex;
    align-items: center;
    gap: 31px;
    padding-left: 2px;
    height: 41px;
}

.top h1 {
    flex: 1;
    height: 36px;
    line-height: 33px;
    font-size: 24px;
    text-align: center;
    color: #fff;
    border: 1px solid #6d7f9c;
    background: linear-gradient(100deg, #8096b8, #6d809b 25%, #485365 50%, #6d809b 75%, #8096b8);
    text-shadow: 1px 1px 2px #333;
}

.settings {
    width: 135px;
    height: 41px;
    font-size: 14px;
    color: #fff;
    background: #6a6272;
    background-clip: padding-box;
    border: 3px solid #fff;
    border-radius: 7px;
    box-shadow: 0 1px 4px #777, inset 0 -1px 1px #000;
}

.panel {
    flex: 1;
    margin-top: 10px;
    padding: 14px 15px 0 14px;
    background: #fff;
    border: 1px solid #777;
    border-bottom: none;
}

.panel-title {
    font-size: 16px;
    line-height: 20px;
    padding: 0 0 2px 3px;
    border-bottom: 1px solid #555;
    font-weight: 300;
}

.grid {
    display: grid;
    grid-template-columns: 133fr 405fr 189fr 219fr;
    gap: 9px;
}

.summary {
    padding-bottom: 33px;
    border-bottom: 1px solid #555;
}

.split {
    display: grid;
    grid-template-columns: 132fr 273fr;
}

.stat {
    padding-top: 51px;
    text-align: center;
}

.stat h3 {
    font-size: 15px;
    font-weight: 300;
    line-height: 19px;
    color: #666;
    padding-bottom: 34px;
    border-bottom: 2px solid #264653;
}

.stat p, .money p {
    font-size: 16px;
    font-weight: bold;
    line-height: 20px;
}

.stat p {
    padding-top: 42px;
}

.completed { background: #2a9d8f; }
.canceled { background: #264653; }
.hold { background: #e9c46a; }
.progress { background: #f4a261; }
.waiting { background: #e76f51; }
.actual { background: #98001b; }

.hbars {
    display: flex;
    flex-direction: column;
    height: 187px;
    margin-top: 29px;
}

.hbar {
    flex: 1;
    display: flex;
    align-items: center;
    font-size: 10px;
}

.hbar .name {
    width: 66px;
    margin-right: 8px;
    text-align: right;
    color: #595959;
}

.track {
    flex: 1;
    display: flex;
    align-items: center;
    align-self: stretch;
    border-left: 1px solid #d9d9d9;
}

.track .bar {
    height: 12px;
}

.track b {
    margin-left: 7px;
}

.donut {
    display: flex;
    align-items: center;
    justify-content: center;
}

.summary .donut {
    align-items: flex-start;
    padding-top: 42px;
}

.donut text {
    font-size: 16px;
    font-weight: bold;
    text-anchor: middle;
    fill: #16263f;
}

.donut.small text {
    font-size: 14px;
    fill: #000;
}

.money {
    display: flex;
    flex-direction: column;
    gap: 33px;
    padding-top: 34px;
    text-align: center;
}

.money h3 {
    font-size: 14px;
    font-weight: 300;
    line-height: 20px;
    color: #666;
    padding-bottom: 15px;
    border-bottom: 2px solid #264653;
}

.money p {
    padding-top: 16px;
}

.picker {
    display: flex;
    align-items: center;
    margin: 19px 0 25px;
    height: 30px;
}

.picker label {
    width: 135px;
    padding-left: 3px;
    font-size: 12px;
    color: #444;
}

.colon {
    width: 6px;
}

.cell {
    position: relative;
    flex: 1;
    height: 30px;
    border: 2px solid #1c5a31;
    margin-right: -1px;
}

.cell select {
    width: 100%;
    height: 24px;
    font-size: 14px;
    font-weight: bold;
    padding-left: 1px;
}

.arrow {
    position: absolute;
    right: -15px;
    bottom: 0;
    width: 13px;
    height: 14px;
    line-height: 8px;
    text-align: center;
    background: #fff;
    border: 1px solid #bbb;
}

.handle {
    position: absolute;
    right: -3px;
    bottom: -3px;
    width: 5px;
    height: 5px;
    background: #1c5a31;
    border: solid #fff;
    border-width: 1px 0 0 1px;
}

.cards {
    height: 164px;
}

.card {
    border: 1px solid #c8c8c8;
    background: #fff;
}

.gray {
    background: #f1f1f1;
}

.total {
    display: grid;
    grid-template-rows: 1fr 1fr;
    text-align: center;
    align-items: center;
}

.total h3 {
    height: 100%;
    line-height: 81px;
    font-size: 13px;
    font-weight: bold;
    color: #777;
    background: #f1f1f1;
    border-bottom: 1px solid #c8c8c8;
}

.total p {
    font-size: 16px;
    font-weight: bold;
}

.chart {
    display: flex;
    flex-direction: column;
    padding: 0 12px;
    font-size: 11px;
}

.plot {
    flex: 1;
    display: flex;
    border-bottom: 1px solid #d9d9d9;
}

.col {
    flex: 1;
    display: flex;
    flex-direction: column;
    align-items: center;
    justify-content: flex-end;
    line-height: 14px;
}

.col > b {
    margin-bottom: 4px;
}

.col .bar {
    width: 24px;
}

.names {
    display: flex;
    height: 24px;
    line-height: 22px;
    font-size: 10px;
    color: #595959;
}

.names span {
    flex: 1;
    text-align: center;
}

.cost {
    background: linear-gradient(#fff 20%, #d9d9d9 68%, #fdfdfd 88%);
    border-color: #ddd;
}

.cost .plot {
    border-color: transparent;
}

.cost .bar {
    position: relative;
    width: 69px;
    padding-top: 11px;
    font-size: 10px;
    color: #fff;
    text-align: center;
}

.cost .bar::after {
    content: "";
    position: absolute;
    left: 100%;
    bottom: 0;
    width: 27px;
    height: 25px;
    background: linear-gradient(#c4c4c4, #b2b2b2 50%, #ddd);
    clip-path: polygon(0 0, 100% 0, 0 100%);
    filter: blur(1px);
}

.cost .actual::after {
    width: 15px;
    clip-path: polygon(0 0, 100% 0, 100% 40%, 0 100%);
}

.cost .names {
    font-size: 11px;
}

/* side column */
.side {
    width: 201px;
    padding-top: 2px;
}

.note {
    padding: 17px 0;
    background: #fff;
    border: 1px solid #bbb;
    font-size: 14px;
    line-height: 15px;
    text-align: center;
    white-space: nowrap;
}

.note h2 {
    font-size: 13px;
    font-weight: bold;
    color: #e01010;
    text-decoration: underline;
    margin-bottom: 30px;
}

.note p + p {
    margin-top: 15px;
}

.pages-title {
    width: 199px;
    margin-top: 68px;
    padding-bottom: 15px;
    border-bottom: 2px solid #666;
    font-size: 16px;
    font-weight: bold;
    line-height: 20px;
    text-align: center;
    color: #777;
}

.pages {
    width: 199px;
    height: 340px;
    border-collapse: collapse;
    font-size: 13px;
}

.pages th {
    height: 65px;
    padding: 8px 0 0 2px;
    font-size: 14px;
    text-align: left;
    color: #777;
}

.pages th:last-child, .pages td:last-child {
    width: 52px;
    padding: 0;
    text-align: center;
}

.pages th:last-child {
    padding-top: 8px;
    font-size: 13px;
}

.pages tbody {
    background: #fff;
    border: 1px solid #888;
}

.pages td {
    height: 27px;
    padding: 0 0 2px 2px;
    color: #2c3a2c;
}

.pages td:first-child {
    border-bottom: 1px solid #ddd;
}

.pages a {
    font-size: 14px;
    font-weight: bold;
    color: #16263f;
}

/* scrollbars */
.vscroll {
    display: flex;
    flex-direction: column;
    align-items: center;
    gap: 3px;
    width: 14px;
    margin: 0 2px;
    padding: 2px 0;
    background: #f6f5f7;
    border-radius: 7px;
}

.vscroll .thumb {
    width: 7px;
    flex: 1;
    margin-bottom: 22px;
    border-radius: 4px;
    background: #6b6b6b;
}

.hscroll {
    display: flex;
    flex: none;
    align-items: center;
    gap: 2px;
    height: 14px;
    margin: 6px 18px 7px 0;
    padding: 0 4px;
    background: #f6f5f7;
    border-radius: 7px;
}

.rail {
    flex: 1;
}

.hscroll .thumb {
    width: 71%;
    height: 7px;
    border-radius: 4px;
    background: #6b6b6b;
}

/* status bar */
.status {
    display: flex;
    flex: none;
    align-items: center;
    gap: 15px;
    height: 18px;
    padding: 0 7px 0 9px;
    background: #f4f4f4;
}

.access {
    display: flex;
    align-items: center;
    gap: 2px;
    font-size: 9px;
    font-weight: 600;
    color: #222;
}

.views {
    display: flex;
    margin-left: auto;
}

.views button {
    width: 33px;
    height: 18px;
    line-height: 18px;
}

.views .on {
    background: #dedede;
}

.zoom {
    display: flex;
    align-items: center;
    gap: 4px;
    margin-left: -12px;
}

.zoom button {
    font-size: 12px;
    width: 8px;
}

.zoom span {
    margin-left: 4px;
}

.zoom input {
    appearance: none;
    width: 82px;
    height: 10px;
    background: linear-gradient(#888, #888) center / 100% 1px no-repeat;
}

.zoom input::-webkit-slider-thumb {
    appearance: none;
    width: 4px;
    height: 9px;
    background: #555;
}
```
